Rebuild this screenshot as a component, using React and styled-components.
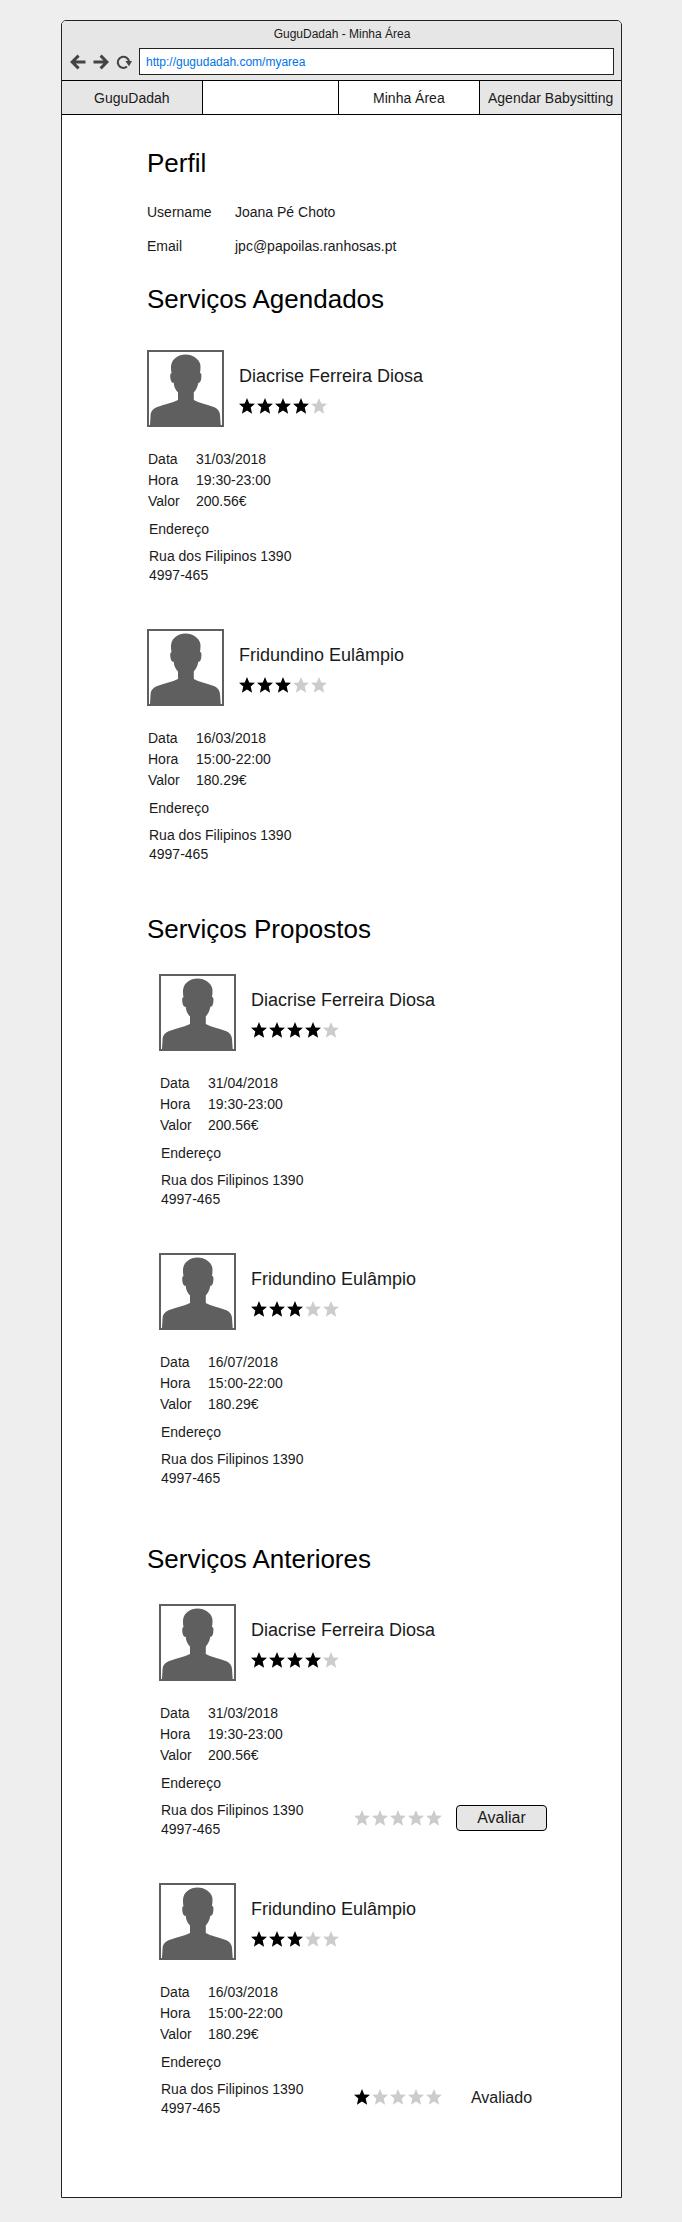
import React, { useState } from "react";
import styled, { createGlobalStyle } from "styled-components";

const GlobalStyle = createGlobalStyle`
  *, *::before, *::after { box-sizing: border-box; }
  body {
    margin: 0;
    background: #eeeeee;
    color: #1a1a1a;
    font-family: "Liberation Sans", Arial, Helvetica, sans-serif;
    font-size: 14px;
  }
  h1, h2, h3, p, dl, dd, ul { margin: 0; padding: 0; font-weight: normal; }
`;

const STAR =
  "polygon(50% 0%, 64% 34%, 100% 36%, 73% 60%, 82% 98%, 50% 78%, 18% 98%, 27% 60%, 0% 36%, 36% 34%)";

const Page = styled.div`
  padding: 20px 60px 24px 61px;
`;

const BrowserWindow = styled.div`
  border: 1px solid #222222;
  border-radius: 5px 5px 0 0;
  background: #ffffff;
`;

const Chrome = styled.header`
  padding: 5px 7px 5px 8px;
  border-radius: 4px 4px 0 0;
  background: #e6e6e6;
`;

const WindowTitle = styled.h1`
  font-size: 12px;
  line-height: 16px;
  text-align: center;
`;

const Toolbar = styled.div`
  display: flex;
  align-items: center;
  gap: 7px;
  margin-top: 6px;
`;

const ToolButton = styled.button`
  display: flex;
  width: 16px;
  height: 16px;
  padding: 0;
  border: 0;
  background: none;
  color: #444444;
`;

const AddressBar = styled.input`
  flex: 1;
  min-width: 0;
  height: 27px;
  padding: 0 6px;
  border: 1px solid #222222;
  border-radius: 0;
  background: #ffffff;
  color: #0073e6;
  font: 12px "Liberation Sans", Arial, sans-serif;
`;

const Tabs = styled.nav`
  display: flex;
  border-top: 1px solid #000000;
  border-bottom: 1px solid #000000;
  line-height: 35px;
  text-align: center;
`;

const Tab = styled.a`
  flex: ${(p) => p.$share} 1 0;
  min-width: 0;
  height: 33px;
  background: ${(p) => (p.$shaded ? "#e6e6e6" : "#ffffff")};
  color: inherit;
  text-decoration: none;
  white-space: nowrap;

  & + & { border-left: 1px solid #000000; }
`;

const Content = styled.main`
  padding: 33px 48px 79px 85px;
`;

const Section = styled.section`
  margin-top: ${(p) => p.$space || 0}px;
`;

const Heading = styled.h2`
  color: #000000;
  font-size: 26px;
  line-height: 30px;
`;

const Profile = styled.dl`
  display: grid;
  grid-template-columns: 88px 1fr;
  row-gap: 14px;
  margin-top: 24px;
  line-height: 20px;
`;

const CardList = styled.div`
  display: flex;
  flex-direction: column;
  gap: 44px;
  margin-top: ${(p) => (p.$indented ? 30 : 36)}px;
  padding-left: ${(p) => (p.$indented ? 12 : 0)}px;
`;

const CardHeader = styled.div`
  display: flex;
  gap: 15px;
`;

const Avatar = styled.div`
  width: 77px;
  height: 77px;
  border: 2px solid #5f5f5f;
  color: #5f5f5f;

  svg { display: block; }
`;

const Person = styled.div`
  display: flex;
  flex-direction: column;
  gap: 12px;
  padding-top: 16px;
`;

const Name = styled.h3`
  font-size: 18px;
  line-height: 20px;
`;

const Stars = styled.div`
  display: flex;
  gap: 2px;
`;

const Star = styled.span`
  width: 16px;
  height: 16px;
  background: ${(p) => (p.$on ? "#000000" : "#cccccc")};
  clip-path: ${STAR};
`;

const StarInput = styled.input`
  appearance: none;
  width: 16px;
  height: 16px;
  margin: 0;
  background: ${(p) => (p.$on ? "#000000" : "#cccccc")};
  clip-path: ${STAR};
  cursor: pointer;
`;

const Details = styled.div`
  display: flex;
  flex-direction: column;
  gap: 8px;
  margin-top: 22px;
  padding-left: 2px;
  line-height: 19px;
`;

const Facts = styled.dl`
  display: grid;
  grid-template-columns: 48px 1fr;
  margin-left: -1px;
  line-height: 21px;
`;

const AddressRow = styled.div`
  display: flex;
`;

const Address = styled.p`
  width: 193px;
  white-space: pre-line;
`;

const Review = styled.div`
  display: flex;
  align-items: center;
  gap: 14px;
  height: 34px;
`;

const RateButton = styled.button`
  width: 91px;
  height: 26px;
  padding: 0;
  border: 1px solid #000000;
  border-radius: 4px;
  background: #e6e6e6;
  color: inherit;
  font: 16px/22px "Liberation Sans", Arial, sans-serif;
`;

const RatedLabel = styled.span`
  width: 91px;
  font-size: 16px;
  text-align: center;
`;

const BackIcon = () => (
  <svg width="16" height="16" viewBox="0 0 16 16" fill="none" stroke="currentColor" strokeWidth="3">
    <path d="M15.500 8H3M8.600 1.600 2.200 8 8.600 14.400" />
  </svg>
);

const ForwardIcon = () => (
  <svg width="16" height="16" viewBox="0 0 16 16" fill="none" stroke="currentColor" strokeWidth="3">
    <path d="M0.500 8h13M7.600 1.600 14 8 7.600 14.400" />
  </svg>
);

const ReloadIcon = () => (
  <svg width="16" height="16" viewBox="0 0 16 16" fill="none">
    <path d="M11 12.600A5.600 5.600 0 1 1 13 7.600" stroke="currentColor" strokeWidth="2" />
    <path d="M9.400 7H16l-3 5.200z" fill="currentColor" />
  </svg>
);

const Silhouette = () => (
  <svg width="73" height="73" viewBox="0 0 73 73" fill="currentColor" aria-hidden="true">
    <path d="M36.500 2.500C44 2.500 50 7 51.300 12.500C51.700 15 51.500 18 51 21C52.800 21 52.600 24 52.200 27C51.800 30 50.500 30.800 49.300 30.800C48.700 35 47 38 44.800 40.500V48C50 51 57 52 64 54.800C68 56.300 70.500 58.500 71 63L71.700 73H1L1.600 63C2 58.500 5 56.300 9 54.800C16 52 23 51 29 48V40.500C26.500 38 25 35 24.700 30.800C23 30.800 22 30 21.500 27C21 24 21 21.500 22.500 21C22 18 21.700 15 22.300 12.500C23.500 7 29 2.500 36.500 2.500Z" />
  </svg>
);

function Rating({ value }) {
  return (
    <Stars role="img" aria-label={`${value} de 5`}>
      {[1, 2, 3, 4, 5].map((n) => <Star key={n} $on={n <= value} />)}
    </Stars>
  );
}

function RatingInput() {
  const [value, setValue] = useState(0);
  return (
    <Stars role="radiogroup" aria-label="Avaliação">
      {[1, 2, 3, 4, 5].map((n) => (
        <StarInput
          key={n}
          type="radio"
          name="avaliacao"
          aria-label={`${n} de 5`}
          $on={n <= value}
          checked={n === value}
          onChange={() => setValue(n)}
        />
      ))}
    </Stars>
  );
}

function ServiceCard({ name, stars, date, time, price, review }) {
  return (
    <article>
      <CardHeader>
        <Avatar><Silhouette /></Avatar>
        <Person>
          <Name>{name}</Name>
          <Rating value={stars} />
        </Person>
      </CardHeader>
      <Details>
        <Facts>
          <dt>Data</dt><dd>{date}</dd>
          <dt>Hora</dt><dd>{time}</dd>
          <dt>Valor</dt><dd>{price}</dd>
        </Facts>
        <p>Endereço</p>
        <AddressRow>
          <Address>{"Rua dos Filipinos 1390\n4997-465"}</Address>
          {review === "open" && (
            <Review>
              <RatingInput />
              <RateButton type="button">Avaliar</RateButton>
            </Review>
          )}
          {review > 0 && (
            <Review>
              <Rating value={review} />
              <RatedLabel>Avaliado</RatedLabel>
            </Review>
          )}
        </AddressRow>
      </Details>
    </article>
  );
}

const diacrise = { name: "Diacrise Ferreira Diosa", stars: 4, time: "19:30-23:00", price: "200.56€" };
const fridundino = { name: "Fridundino Eulâmpio", stars: 3, time: "15:00-22:00", price: "180.29€" };

const sections = [
  {
    title: "Serviços Agendados",
    space: 28,
    services: [{ ...diacrise, date: "31/03/2018" }, { ...fridundino, date: "16/03/2018" }],
  },
  {
    title: "Serviços Propostos",
    space: 50,
    indented: true,
    services: [{ ...diacrise, date: "31/04/2018" }, { ...fridundino, date: "16/07/2018" }],
  },
  {
    title: "Serviços Anteriores",
    space: 56,
    indented: true,
    services: [
      { ...diacrise, date: "31/03/2018", review: "open" },
      { ...fridundino, date: "16/03/2018", review: 1 },
    ],
  },
];

export default function App() {
  const [url, setUrl] = useState("http://gugudadah.com/myarea");
  return (
    <Page>
      <GlobalStyle />
      <BrowserWindow>
        <Chrome>
          <WindowTitle>GuguDadah - Minha Área</WindowTitle>
          <Toolbar>
            <ToolButton type="button" aria-label="Voltar"><BackIcon /></ToolButton>
            <ToolButton type="button" aria-label="Avançar"><ForwardIcon /></ToolButton>
            <ToolButton type="button" aria-label="Recarregar"><ReloadIcon /></ToolButton>
            <AddressBar type="text" aria-label="URL" value={url} onChange={(e) => setUrl(e.target.value)} />
          </Toolbar>
        </Chrome>
        <Tabs>
          <Tab href="#inicio" $share={140} $shaded>GuguDadah</Tab>
          <Tab as="span" $share={135} />
          <Tab href="#minha-area" $share={141} aria-current="page">Minha Área</Tab>
          <Tab href="#agendar" $share={141} $shaded>Agendar Babysitting</Tab>
        </Tabs>
        <Content>
          <Section>
            <Heading>Perfil</Heading>
            <Profile>
              <dt>Username</dt><dd>Joana Pé Choto</dd>
              <dt>Email</dt><dd>jpc@papoilas.ranhosas.pt</dd>
            </Profile>
          </Section>
          {sections.map((s) => (
            <Section key={s.title} $space={s.space}>
              <Heading>{s.title}</Heading>
              <CardList $indented={s.indented}>
                {s.services.map((service) => <ServiceCard key={service.name} {...service} />)}
              </CardList>
            </Section>
          ))}
        </Content>
      </BrowserWindow>
    </Page>
  );
}
